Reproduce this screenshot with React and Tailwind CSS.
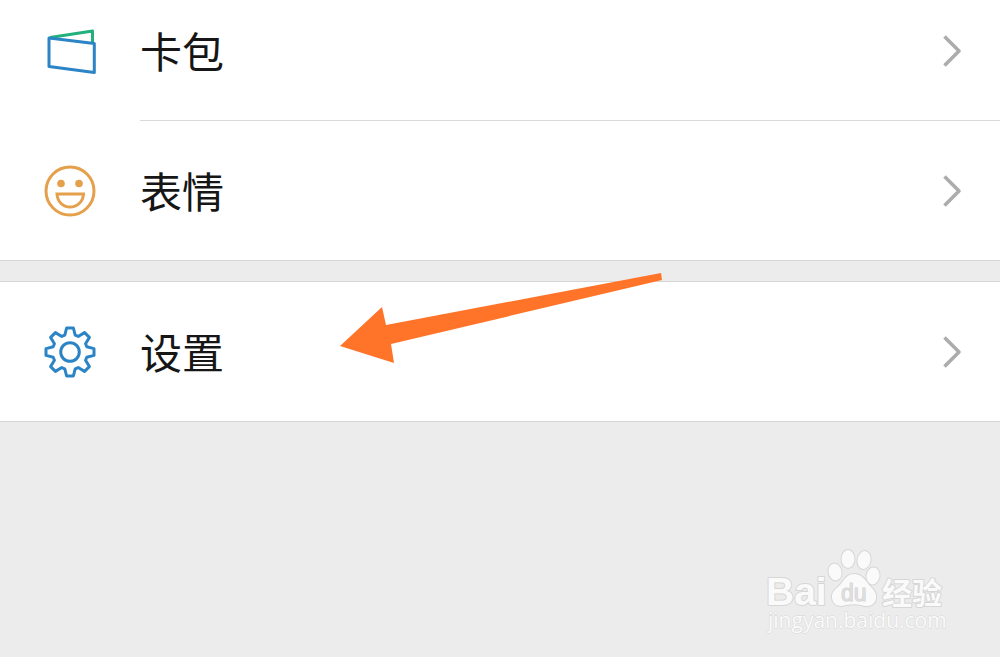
const BLUE = "#2b84c6";

function CardIcon() {
  return (
    <svg viewBox="0 0 52 52" className="size-13" fill="none" strokeWidth="3" strokeLinejoin="round" aria-hidden="true">
      <path d="M6 12.5 48.5 6V18" stroke="#22b07d" />
      <path d="M5 13 50.3 18.5V47.5L5 41.5Z" stroke={BLUE} />
    </svg>
  );
}

function SmileIcon() {
  return (
    <svg viewBox="0 0 52 52" className="size-13" fill="none" stroke="#e5a04c" strokeWidth="3" aria-hidden="true">
      <circle cx="26" cy="26" r="24" />
      <circle cx="17" cy="18.5" r="3.8" fill="#e5a04c" stroke="none" />
      <circle cx="35" cy="18.5" r="3.8" fill="#e5a04c" stroke="none" />
      <path d="M13 29H39.5C39 37 33 42 26 42S13.5 37 13 29Z" />
    </svg>
  );
}

// one tooth, repeated every 45 degrees
const TOOTH = [[-5.2, -16.8], [-3.4, -24], [3.4, -24], [5.2, -16.8]];

const gearPoints = Array.from({ length: 8 }, (_, i) => {
  const a = (i * Math.PI) / 4;
  return TOOTH.map(([x, y]) =>
    [26 + x * Math.cos(a) - y * Math.sin(a), 26 + x * Math.sin(a) + y * Math.cos(a)].join(",")
  ).join(" ");
}).join(" ");

function GearIcon() {
  return (
    <svg viewBox="0 0 52 52" className="size-13" fill="none" stroke={BLUE} strokeWidth="3" strokeLinejoin="round" aria-hidden="true">
      <polygon points={gearPoints} />
      <circle cx="26" cy="26" r="9.3" />
    </svg>
  );
}

function Chevron() {
  return (
    <svg viewBox="0 0 20 36" className="h-9 w-5" fill="none" stroke="#acacac" strokeWidth="3.6" strokeLinejoin="round" aria-hidden="true">
      <path d="M2.5 3.5 17 18 2.5 32.5" />
    </svg>
  );
}

function Row({ icon, label, className }) {
  return (
    <a href="#" className={`flex items-center bg-white pl-11 ${className}`}>
      {icon}
      <span className="ml-11 flex-1 pb-0.5 text-[42px] leading-none text-[#161616]">{label}</span>
      <span className="mr-[38px]">
        <Chevron />
      </span>
    </a>
  );
}

function Arrow() {
  return (
    <svg viewBox="0 0 324 92" className="pointer-events-none absolute top-[272px] left-[339px] h-[92px] w-[324px]" aria-hidden="true">
      <path d="M1 74 43 35 47 53 322 1 323 8 52 72 55 91Z" fill="#ff7428" />
    </svg>
  );
}

function Watermark() {
  return (
    <svg
      viewBox="0 0 184 92"
      className="pointer-events-none absolute right-[50px] bottom-[18px] h-[92px] w-[184px]"
      fill="#fafafa"
      stroke="#d6d6d6"
      strokeWidth="2"
      paintOrder="stroke"
      strokeLinejoin="round"
    >
      <text x="0" y="58" className="font-['Liberation_Sans',sans-serif] text-[39px] font-bold">Bai</text>
      <ellipse cx="69" cy="25" rx="6.5" ry="8.5" transform="rotate(-12 69 25)" />
      <ellipse cx="82" cy="12" rx="6.5" ry="9" />
      <ellipse cx="98" cy="13" rx="6.5" ry="9" transform="rotate(10 98 13)" />
      <ellipse cx="107" cy="29" rx="6.5" ry="8.5" transform="rotate(8 107 29)" />
      <path d="M88 27C95 27 99 32 103 38C108 43 111 46 110 52C108 60 100 60 95 58C90 57 85 57 80 58C74 60 67 59 66 51C65 45 70 42 74 38C78 33 81 27 88 27Z" />
      <text x="75" y="54" fill="#dedede" stroke="#d0d0d0" strokeWidth="1" className="font-['Liberation_Sans',sans-serif] text-[23px]">du</text>
      <text x="116" y="57" className="font-['Noto_Sans_CJK_SC',sans-serif] text-[30px] font-bold">经验</text>
      <text x="2" y="81" strokeWidth="1" className="font-['Open_Sans',sans-serif] text-[21px]">jingyan.baidu.com</text>
    </svg>
  );
}

export default function App() {
  return (
    <div className="relative min-h-screen bg-[#ececec] font-['Noto_Sans_CJK_SC',sans-serif]">
      <nav>
        <section className="border-b border-[#d6d6d6] bg-white">
          <Row icon={<CardIcon />} label="卡包" className="h-[120px] pb-[18px]" />
          <div className="ml-[140px] h-px bg-[#d9d9d9]" />
          <Row icon={<SmileIcon />} label="表情" className="h-[139px]" />
        </section>
        <section className="mt-5 border-y border-[#d6d6d6] bg-white">
          <Row icon={<GearIcon />} label="设置" className="h-[139px]" />
        </section>
      </nav>
      <Arrow />
      <Watermark />
    </div>
  );
}
